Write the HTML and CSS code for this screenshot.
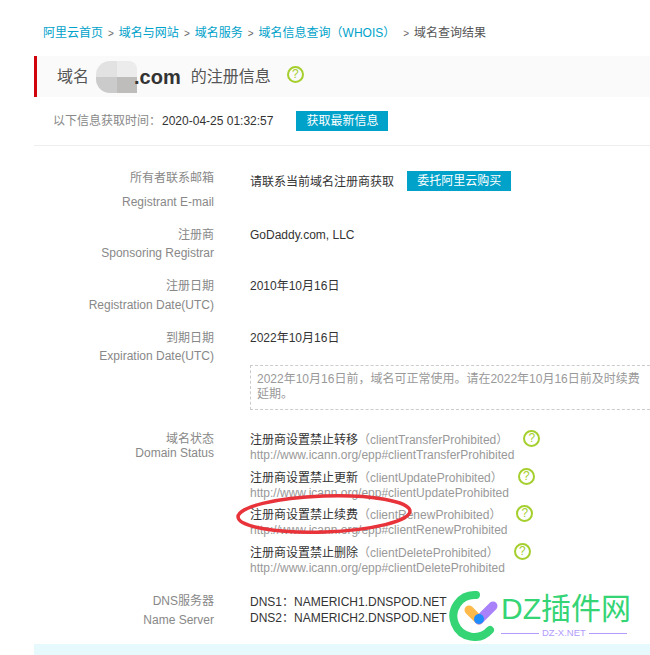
FILE: index.html
```html
<!DOCTYPE html>
<html>
<head>
    <meta charset="utf-8">
    <meta name="viewport" content="width=device-width, initial-scale=1.0">
    <link rel="stylesheet" href="styles.css">
</head>
<body>
    <div class="page">
        <div class="crumbs">
            <a>阿里云首页</a><span class="sep">&gt;</span><a>域名与网站</a><span class="sep">&gt;</span><a>域名服务</a><span class="sep">&gt;</span><a>域名信息查询（WHOIS）</a><span class="sep sep-wide">&gt;</span><span>域名查询结果</span>
        </div>

        <div class="title-bar">
            <span>域名</span>
            <span class="domain">
                <span class="mosaic">
                    <i class="m1"></i><i class="m2"></i><i class="m3"></i><i class="m4"></i>
                </span>
                <b>.com</b>
            </span>
            <span>的注册信息</span>
            <span class="help help-big">?</span>
        </div>

        <div class="fetch-row">
            <span class="fetch-label">以下信息获取时间：</span>
            <span class="fetch-time">2020-04-25 01:32:57</span>
            <span class="btn btn-fetch">获取最新信息</span>
        </div>

        <div class="info">
            <div class="row row-email">
                <div class="row-label">
                    <div>所有者联系邮箱</div>
                    <div class="en en-far">Registrant E-mail</div>
                </div>
                <div class="row-value value-email">
                    <span>请联系当前域名注册商获取</span>
                    <span class="btn btn-buy">委托阿里云购买</span>
                </div>
            </div>

            <div class="row row-registrar">
                <div class="row-label">
                    <div>注册商</div>
                    <div class="en">Sponsoring Registrar</div>
                </div>
                <div class="row-value">GoDaddy.com, LLC</div>
            </div>

            <div class="row row-date">
                <div class="row-label">
                    <div>注册日期</div>
                    <div class="en en-date">Registration Date(UTC)</div>
                </div>
                <div class="row-value">2010年10月16日</div>
            </div>

            <div class="row row-expire">
                <div class="row-label">
                    <div>到期日期</div>
                    <div class="en">Expiration Date(UTC)</div>
                </div>
                <div class="row-value">
                    <div>2022年10月16日</div>
                    <div class="notice">2022年10月16日前，域名可正常使用。请在2022年10月16日前及时续费延期。</div>
                </div>
            </div>

            <div class="row row-status">
                <div class="row-label">
                    <div>域名状态</div>
                    <div class="en en-near">Domain Status</div>
                </div>
                <div class="row-value">
                    <div class="status">
                        <div class="status-line">注册商设置禁止转移<span class="code">（clientTransferProhibited）</span><span class="help">?</span></div>
                        <div class="url">http://www.icann.org/epp#clientTransferProhibited</div>
                    </div>
                    <div class="status">
                        <div class="status-line">注册商设置禁止更新<span class="code">（clientUpdateProhibited）</span><span class="help">?</span></div>
                        <div class="url">http://www.icann.org/epp#clientUpdateProhibited</div>
                    </div>
                    <div class="status">
                        <div class="status-line">注册商设置禁止续费<span class="code">（clientRenewProhibited）</span><span class="help">?</span></div>
                        <div class="url">http://www.icann.org/epp#clientRenewProhibited</div>
                    </div>
                    <div class="status">
                        <div class="status-line">注册商设置禁止删除<span class="code">（clientDeleteProhibited）</span><span class="help">?</span></div>
                        <div class="url">http://www.icann.org/epp#clientDeleteProhibited</div>
                    </div>
                </div>
            </div>

            <div class="row row-dns">
                <div class="row-label">
                    <div>DNS服务器</div>
                    <div class="en">Name Server</div>
                </div>
                <div class="row-value value-dns">
                    <div>DNS1：NAMERICH1.DNSPOD.NET</div>
                    <div class="dns-second">DNS2：NAMERICH2.DNSPOD.NET</div>
                </div>
            </div>
        </div>

        <div class="bottom-band"></div>
    </div>

    <!-- hand drawn mark over the renew line -->
    <svg class="circle-mark" width="190" height="50" viewBox="0 0 190 50">
        <ellipse cx="94" cy="25" rx="86" ry="18" transform="rotate(-2 94 25)" fill="none" stroke="#e8333a" stroke-width="3.5"/>
    </svg>

    <div class="watermark">
        <svg class="wm-logo" width="50" height="52" viewBox="0 0 50 52">
            <path d="M27 6 A21 21 0 1 0 41 41" fill="none" stroke="#35d475" stroke-width="8" stroke-linecap="round"/>
            <path d="M20 21 L30 31" stroke="#fdb94a" stroke-width="9" stroke-linecap="round"/>
            <path d="M30 31 L44 17" stroke="#a982fb" stroke-width="9" stroke-linecap="round"/>
            <circle cx="30" cy="30" r="5" fill="#1e8cfb"/>
        </svg>
        <div class="wm-text">
            <div class="wm-name">DZ插件网</div>
            <div class="wm-sub"><span class="wm-line"></span>DZ-X.NET<span class="wm-line"></span></div>
        </div>
    </div>
</body>
</html>
```

FILE: styles.css
```css
* {
    box-sizing: border-box;
}

html, body {
    margin: 0;
    padding: 0;
}

body {
    width: 650px;
    height: 655px;
    position: relative;
    overflow: hidden;
    background: #fff;
    font-family: "Liberation Sans", "Noto Sans CJK SC", sans-serif;
    font-size: 12px;
    line-height: 18px;
    color: #333;
}

.page {
    height: 655px;
    padding: 24px 0 0 34px;
    overflow: hidden;
}

.crumbs {
    height: 18px;
    padding-left: 9px;
    color: #555;
    white-space: nowrap;
}

.crumbs a {
    color: #00a2ca;
}

.sep {
    margin: 0 5px;
    font-size: 10px;
    color: #666;
}

.sep-wide {
    margin-left: 8px;
}

.title-bar {
    display: flex;
    align-items: center;
    height: 41px;
    margin-top: 14px;
    padding-left: 20px;
    background: #fafafa;
    border-left: 3px solid #d0020a;
    font-size: 16px;
    color: #555;
}

.domain {
    display: flex;
    align-items: center;
    margin: 0 10px 0 7px;
}

.domain b {
    color: #333;
    font-size: 20px;
    margin-left: -3px;
}

.mosaic {
    display: grid;
    grid-template-columns: 21px 20px;
    grid-template-rows: 16px 16px;
    width: 41px;
    height: 32px;
    border-radius: 14px 8px 0 14px;
    overflow: hidden;
}

.m1 { background: #e2e2e2; }
.m2 { background: #ececec; }
.m3 { background: #cbcbcb; }
.m4 { background: #bfbcbc; }

.help {
    display: inline-block;
    width: 17px;
    height: 17px;
    margin-left: 14px;
    border: 2px solid #a5cf2d;
    border-radius: 50%;
    color: #a5cf2d;
    font-size: 12px;
    line-height: 13px;
    text-align: center;
    vertical-align: top;
}

.help-big {
    margin-left: 16px;
    margin-top: -4px;
}

.fetch-row {
    display: flex;
    align-items: center;
    height: 20px;
    margin-top: 14px;
    padding-left: 19px;
}

.fetch-label {
    color: #888;
}

.fetch-time {
    margin-left: 1px;
    color: #333;
}

.btn {
    display: inline-block;
    height: 20px;
    line-height: 20px;
    padding: 0 10px;
    background: #00a2ca;
    color: #fff;
    text-align: center;
}

.btn-fetch {
    margin-left: 23px;
}

.btn-buy {
    margin-left: 10px;
}

.info {
    margin-top: 14px;
    padding-top: 23px;
    border-top: 1px solid #eee;
}

.row {
    display: flex;
}

.row-label {
    width: 180px;
    text-align: right;
    color: #888;
}

.row-value {
    margin-left: 36px;
    color: #333;
    flex: 1;
}

.en-far {
    margin-top: 6px;
}

.en-near {
    margin-top: -4px;
}

.en-date {
    margin-top: 1px;
}

.value-email {
    padding-top: 4px;
}

.value-email .btn {
    margin-top: -4px;
    vertical-align: middle;
}

.row-registrar {
    margin-top: 15px;
}

.row-date {
    margin-top: 15px;
}

.row-expire {
    margin-top: 15px;
}

.notice {
    height: 45px;
    width: 400px;
    margin-top: 18px;
    padding: 6px 0 0 6px;
    border: 1px dashed #ccc;
    border-right: 0;
    color: #999;
    line-height: 15px;
}

.row-status {
    margin-top: 20px;
}

.status {
    margin-bottom: 7.5px;
    line-height: 15px;
}

.status:first-child {
    margin-top: 3px;
}

.status-line {
    height: 15px;
}

.code {
    color: #999;
}

.url {
    color: #999;
}

.status .help {
    margin-top: -3px;
    margin-left: 15px;
}

.row-dns {
    margin-top: 9px;
}

.row-dns .en {
    margin-top: 1px;
}

.value-dns {
    padding-top: 1px;
}

.dns-second {
    margin-top: -2px;
}

.bottom-band {
    height: 30px;
    margin-top: 15px;
    background: #e6f9fc;
}

.circle-mark {
    position: absolute;
    left: 230px;
    top: 489px;
}

.watermark {
    position: absolute;
    left: 449px;
    top: 589px;
    display: flex;
    gap: 2px;
}

.wm-text {
    padding-top: 3px;
}

.wm-name {
    font-size: 30px;
    line-height: 34px;
    color: #35d475;
}

.wm-sub {
    display: flex;
    align-items: center;
    gap: 3px;
    margin-top: 2px;
    font-size: 9.5px;
    line-height: 10px;
    color: #b39bfb;
}

.wm-line {
    width: 38px;
    height: 1px;
    background: #b39bfb;
}
```
